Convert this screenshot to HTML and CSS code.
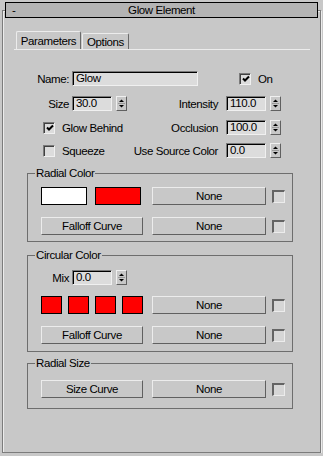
FILE: index.html
```html
<!DOCTYPE html>
<html lang="en">
<head>
    <meta charset="UTF-8">
    <title>Glow Element</title>
    <link rel="stylesheet" href="styles.css">
</head>
<body>
    <div class="rollout">
        <div class="title">
            <span class="minus">-</span>
            <span class="title-text">Glow Element</span>
        </div>

        <div class="tabs">
            <div class="tab tab-params active">Parameters</div>
            <div class="tab tab-options">Options</div>
        </div>

        <!-- champs du haut -->
        <div class="row row-name">
            <div class="half-left">
                <span class="lbl">Name:</span>
                <div class="field field-name">Glow</div>
            </div>
            <div class="half-right">
                <span class="check checked on-check"><svg width="8" height="8" viewBox="0 0 8 8"><path d="M1 3.5 L3 5.5 L7 1.5" fill="none" stroke="#000" stroke-width="2"/></svg></span>
                <span class="check-lbl">On</span>
            </div>
        </div>

        <div class="row row-size">
            <div class="half-left">
                <span class="lbl">Size</span>
                <div class="field field-num">30.0</div>
                <span class="spinner"><svg width="9" height="13" viewBox="0 0 9 13"><path d="M2 5 L7 5 L4.5 2.5 Z" fill="#000"/><path d="M1 6.5 H8" stroke="#9a9a9a"/><path d="M2 8 L7 8 L4.5 10.5 Z" fill="#000"/></svg></span>
            </div>
            <div class="half-right">
                <span class="lbl-right">Intensity</span>
                <div class="field field-num">110.0</div>
                <span class="spinner"><svg width="9" height="13" viewBox="0 0 9 13"><path d="M2 5 L7 5 L4.5 2.5 Z" fill="#000"/><path d="M1 6.5 H8" stroke="#9a9a9a"/><path d="M2 8 L7 8 L4.5 10.5 Z" fill="#000"/></svg></span>
            </div>
        </div>

        <div class="row row-behind">
            <div class="half-left">
                <span class="check checked left-check"><svg width="8" height="8" viewBox="0 0 8 8"><path d="M1 3.5 L3 5.5 L7 1.5" fill="none" stroke="#000" stroke-width="2"/></svg></span>
                <span class="check-lbl">Glow Behind</span>
            </div>
            <div class="half-right">
                <span class="lbl-right">Occlusion</span>
                <div class="field field-num">100.0</div>
                <span class="spinner"><svg width="9" height="13" viewBox="0 0 9 13"><path d="M2 5 L7 5 L4.5 2.5 Z" fill="#000"/><path d="M1 6.5 H8" stroke="#9a9a9a"/><path d="M2 8 L7 8 L4.5 10.5 Z" fill="#000"/></svg></span>
            </div>
        </div>

        <div class="row row-squeeze">
            <div class="half-left">
                <span class="check left-check"></span>
                <span class="check-lbl">Squeeze</span>
            </div>
            <div class="half-right">
                <span class="lbl-right">Use Source Color</span>
                <div class="field field-num">0.0</div>
                <span class="spinner"><svg width="9" height="13" viewBox="0 0 9 13"><path d="M2 5 L7 5 L4.5 2.5 Z" fill="#000"/><path d="M1 6.5 H8" stroke="#9a9a9a"/><path d="M2 8 L7 8 L4.5 10.5 Z" fill="#000"/></svg></span>
            </div>
        </div>

        <!-- Radial Color -->
        <div class="group group-radial">
            <div class="group-title">Radial Color</div>
            <div class="group-row first-row">
                <span class="swatch swatch-wide white"></span>
                <span class="swatch swatch-wide red second-swatch"></span>
                <div class="btn btn-none first-none">None</div>
                <span class="flag"></span>
            </div>
            <div class="group-row next-row">
                <div class="btn btn-curve">Falloff Curve</div>
                <div class="btn btn-none">None</div>
                <span class="flag"></span>
            </div>
        </div>

        <!-- Circular Color -->
        <div class="group group-circular">
            <div class="group-title">Circular Color</div>
            <div class="mix-row">
                <span class="lbl lbl-mix">Mix</span>
                <div class="field field-num">0.0</div>
                <span class="spinner"><svg width="9" height="13" viewBox="0 0 9 13"><path d="M2 5 L7 5 L4.5 2.5 Z" fill="#000"/><path d="M1 6.5 H8" stroke="#9a9a9a"/><path d="M2 8 L7 8 L4.5 10.5 Z" fill="#000"/></svg></span>
            </div>
            <div class="group-row swatch-row">
                <span class="swatch swatch-small red"></span>
                <span class="swatch swatch-small red"></span>
                <span class="swatch swatch-small red"></span>
                <span class="swatch swatch-small red last-swatch"></span>
                <div class="btn btn-none">None</div>
                <span class="flag"></span>
            </div>
            <div class="group-row next-row">
                <div class="btn btn-curve">Falloff Curve</div>
                <div class="btn btn-none">None</div>
                <span class="flag"></span>
            </div>
        </div>

        <!-- Radial Size -->
        <div class="group group-size">
            <div class="group-title">Radial Size</div>
            <div class="group-row size-row">
                <div class="btn btn-curve">Size Curve</div>
                <div class="btn btn-none">None</div>
                <span class="flag"></span>
            </div>
        </div>
    </div>
</body>
</html>
```

FILE: styles.css
```css
body {
    margin: 0;
    background-color: #c8c8c8;
    font-family: "Liberation Sans", Arial, sans-serif;
    font-size: 11.5px;
    letter-spacing: -0.4px;
    color: #000;
}

.rollout {
    box-sizing: border-box;
    width: 319px;
    height: 443px;
    margin: 10px 0 0 2px;
    border: 1px solid #7c7c7c;
    box-shadow: inset 1px 1px 0 #ececec, 1px 1px 0 #ececec;
}

.title {
    box-sizing: border-box;
    height: 16px;
    margin: -9px 2px 0;
    border: 1px solid #000;
    background-color: #b4b4b4;
    display: grid;
    grid-template-columns: 24px 1fr 24px;
    align-items: center;
    line-height: 14px;
}

.minus {
    padding-left: 6px;
}

.title-text {
    text-align: center;
}

/* onglets */
.tabs {
    box-sizing: border-box;
    display: flex;
    align-items: flex-end;
    width: 296px;
    height: 19px;
    margin: 13px 0 0 11px;
    padding-left: 2px;
    border-bottom: 1px solid #ececec;
}

.tab {
    box-sizing: border-box;
    height: 16px;
    display: flex;
    align-items: center;
    justify-content: center;
    border: 1px solid;
    border-bottom: none;
    border-color: #ececec #6a6a6a transparent #ececec;
    border-radius: 2px 2px 0 0;
}

.tab.active {
    height: 18px;
}

.tab-params {
    width: 65px;
}

.tab-options {
    width: 47px;
    margin-left: 1px;
}

/* lignes de parametres */
.row {
    display: flex;
    align-items: center;
    height: 15px;
}

.row-name {
    margin-top: 21px;
}

.row-size {
    margin-top: 10px;
}

.row-behind {
    margin-top: 9px;
}

.row-squeeze {
    margin-top: 8px;
}

.half-left {
    flex-shrink: 0;
    width: 146px;
    display: flex;
    align-items: center;
}

.half-right {
    flex: 1;
    display: flex;
    align-items: center;
}

.half-left > *,
.half-right > * {
    flex-shrink: 0;
}

.lbl {
    flex-shrink: 0;
    width: 66px;
    margin-right: 3px;
    text-align: right;
}

.lbl-right {
    width: 69px;
    margin-right: 8px;
    display: flex;
    justify-content: flex-end;
    white-space: nowrap;
}

.field {
    box-sizing: border-box;
    height: 15px;
    padding-left: 3px;
    line-height: 13px;
    background-color: #dcdcdc;
    border: 1px solid;
    border-color: #7a7a7a #f0f0f0 #f0f0f0 #7a7a7a;
    box-shadow: inset 1px 1px 0 #000;
}

.field-name {
    width: 126px;
}

.field-num {
    width: 40px;
}

.spinner {
    box-sizing: border-box;
    width: 11px;
    height: 15px;
    margin-left: 4px;
    border: 1px solid;
    border-color: #f0f0f0 #606060 #606060 #f0f0f0;
    display: flex;
}

.check {
    box-sizing: border-box;
    width: 12px;
    height: 12px;
    display: flex;
    align-items: center;
    justify-content: center;
    background-color: #dcdcdc;
    border: 1px solid;
    border-color: #7a7a7a #f0f0f0 #f0f0f0 #7a7a7a;
    box-shadow: inset 1px 1px 0 #404040;
}

.check svg {
    margin: 1px 0 0 1px;
}

.on-check {
    margin-left: 90px;
    align-self: flex-start;
}

.left-check {
    margin-left: 40px;
}

.check-lbl {
    margin-left: 7px;
}

/* groupes */
.group {
    box-sizing: border-box;
    width: 266px;
    margin-left: 24px;
    border: 1px solid #6e6e6e;
}

.group-radial {
    margin-top: 15px;
    padding-bottom: 6px;
}

.group-circular {
    margin-top: 13px;
    padding-bottom: 7px;
}

.group-size {
    margin-top: 11px;
    padding-bottom: 10px;
}

.group-title {
    width: max-content;
    margin: -7px 0 0 7px;
    padding: 0 1px;
    line-height: 13px;
    background-color: #c8c8c8;
}

.group-row {
    display: flex;
    align-items: center;
    height: 18px;
    padding-left: 13px;
}

.group-row > * {
    flex-shrink: 0;
}

.first-row {
    margin-top: 7px;
}

.next-row {
    margin-top: 12px;
}

.swatch-row {
    margin-top: 11px;
}

.size-row {
    margin-top: 10px;
}

.mix-row {
    display: flex;
    align-items: center;
    height: 15px;
    margin-top: 8px;
}

.lbl-mix {
    width: 41px;
}

.swatch {
    box-sizing: border-box;
    height: 18px;
    border: 1px solid #000;
}

.swatch-wide {
    width: 46px;
}

.second-swatch {
    margin-left: 8px;
}

.swatch-small {
    width: 21px;
    margin-right: 6px;
}

.last-swatch {
    margin-right: 0;
}

.white {
    background-color: #fff;
}

.red {
    background-color: #f00;
}

.btn {
    box-sizing: border-box;
    height: 18px;
    display: flex;
    align-items: center;
    justify-content: center;
    border: 1px solid;
    border-color: #ececec #606060 #606060 #ececec;
}

.btn-none {
    width: 114px;
    margin-left: 9px;
}

.first-none {
    margin-left: 11px;
}

.btn-curve {
    width: 102px;
}

.flag {
    box-sizing: border-box;
    width: 13px;
    height: 13px;
    margin-left: 6px;
    background-color: #d6d6d6;
    border-style: solid;
    border-width: 2px 1px 1px 2px;
    border-color: #646464 #ececec #ececec #646464;
}
```
